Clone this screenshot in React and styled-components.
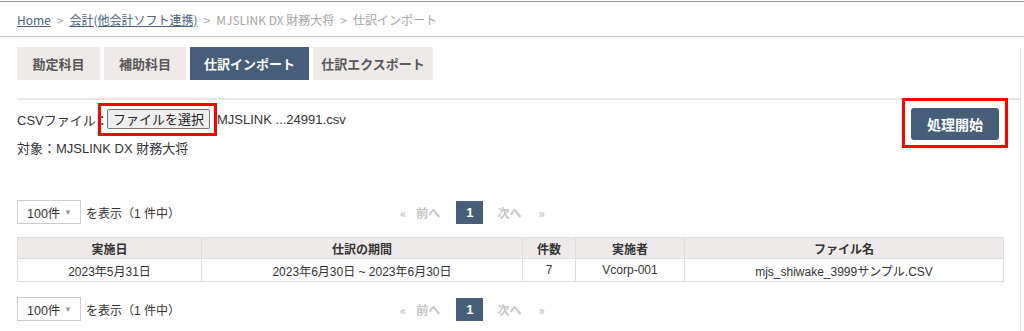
import React from "react";
import styled, { createGlobalStyle } from "styled-components";

const GlobalStyle = createGlobalStyle`
  body {
    margin: 0;
    background: #fff;
    font-family: "Liberation Sans", "Noto Sans CJK JP", sans-serif;
    color: #333;
  }
`;

const Page = styled.div`
  width: 1024px;
  height: 331px;
  overflow: hidden;
  border-top: 1px solid #9a9a9a;
  margin-top: 1px;
  box-sizing: border-box;
`;

const Breadcrumb = styled.nav`
  height: 34px;
  padding-left: 17px;
  display: flex;
  align-items: center;
  gap: 6px;
  font-family: "Noto Sans CJK JP", sans-serif;
  font-size: 12px;
  color: #a5a5a5;
  border-bottom: 1px solid #bdbdbd;
`;

const Crumb = styled.a`
  color: #4a6380;
  text-decoration: underline;
`;

const Content = styled.main`
  width: 1021px;
  box-sizing: border-box;
  padding-left: 17px;
  border-right: 1px solid #e6e6e6;
  height: 100%;
`;

const Tabs = styled.div`
  display: flex;
  gap: 4px;
  margin-top: 10px;
`;

const Tab = styled.div`
  width: ${(p) => p.$width}px;
  height: 33px;
  display: flex;
  align-items: center;
  justify-content: center;
  font-family: "Noto Sans CJK JP", sans-serif;
  font-weight: bold;
  font-size: 13px;
  background: ${(p) => (p.$active ? "#465e7a" : "#eeeae9")};
  color: ${(p) => (p.$active ? "#fff" : "#595757")};
`;

const Divider = styled.hr`
  margin: 18px 0 0;
  border: none;
  border-top: 2px solid #e6e6e6;
`;

const UploadSection = styled.section`
  display: flex;
  justify-content: space-between;
  align-items: flex-start;
`;

const UploadInfo = styled.div`
  font-size: 13px;
  color: #333;
`;

const FileRow = styled.div`
  display: flex;
  align-items: center;
  margin-top: 9px;
  height: 20px;
`;

const FileLabel = styled.span`
  width: 90px;
  white-space: nowrap;
`;

const Highlight = styled.span`
  position: relative;
  display: inline-flex;
  margin: ${(p) => p.$margin || "0"};

  &::after {
    content: "";
    position: absolute;
    inset: ${(p) => p.$inset};
    border: 3px solid #ff0000;
    pointer-events: none;
  }
`;

const FileButton = styled.button`
  height: 20px;
  padding: 0 5px;
  font-family: "Noto Sans CJK JP", sans-serif;
  font-size: 13px;
  line-height: 18px;
  color: #222;
  background: #efefef;
  border: 1px solid #767676;
  border-radius: 2px;
`;

const FileName = styled.span`
  margin-left: 7px;
`;

const Target = styled.div`
  margin-top: 10px;
  line-height: 20px;
`;

const StartButton = styled.button`
  width: 88px;
  height: 32px;
  border: none;
  border-radius: 3px;
  background: #465e7a;
  color: #fff;
  font-family: "Noto Sans CJK JP", sans-serif;
  font-weight: bold;
  font-size: 14px;
`;

const ListBar = styled.div`
  display: flex;
  align-items: center;
  height: 24px;
  margin-top: ${(p) => p.$top}px;
`;

const Summary = styled.div`
  width: 383px;
  display: flex;
  align-items: center;
  font-size: 12px;
  color: #333;
`;

const Select = styled.div`
  width: 64px;
  height: 24px;
  box-sizing: border-box;
  border: 1px solid #ccc;
  display: flex;
  align-items: center;
  justify-content: space-between;
  padding: 0 8px 0 9px;
  margin-right: 5px;
  font-size: 12.5px;
  color: #333;
`;

const Caret = styled.span`
  font-size: 8px;
  color: #999;
`;

const Pager = styled.div`
  display: flex;
  align-items: center;
  font-family: "Noto Sans CJK JP", sans-serif;
  font-weight: bold;
  font-size: 12px;
  color: #c4c4c4;
`;

const PagerLink = styled.span`
  margin-right: ${(p) => p.$gap}px;
`;

const PageNum = styled.span`
  width: 27px;
  height: 23px;
  display: flex;
  align-items: center;
  justify-content: center;
  background: #465e7a;
  color: #fff;
  font-family: "Liberation Sans", sans-serif;
  font-size: 13px;
  margin-right: 14px;
`;

const Table = styled.table`
  width: 986px;
  margin-top: 13px;
  border-collapse: collapse;
  font-size: 12px;
  color: #333;
  table-layout: fixed;

  th,
  td {
    border: 1px solid #e0dcdb;
    text-align: center;
    padding: 0;
  }
  th {
    height: 20px;
    background: #eeeae9;
    font-family: "Noto Sans CJK JP", sans-serif;
    font-weight: bold;
  }
  td {
    height: 22px;
  }
`;

const tabs = [
  { label: "勘定科目", width: 83 },
  { label: "補助科目", width: 82 },
  { label: "仕訳インポート", width: 119, active: true },
  { label: "仕訳エクスポート", width: 120 },
];

const columns = [
  { label: "実施日", width: 184 },
  { label: "仕訳の期間", width: 321 },
  { label: "件数", width: 53 },
  { label: "実施者", width: 109 },
  { label: "ファイル名", width: 319 },
];

const rows = [
  ["2023年5月31日", "2023年6月30日 ~ 2023年6月30日", "7", "Vcorp-001", "mjs_shiwake_3999サンプル.CSV"],
];

function ListControls({ top }) {
  return (
    <ListBar $top={top}>
      <Summary>
        <Select>
          100件 <Caret>▼</Caret>
        </Select>
        を表示（1 件中）
      </Summary>
      <Pager>
        <PagerLink $gap={10}>«</PagerLink>
        <PagerLink $gap={16}>前へ</PagerLink>
        <PageNum>1</PageNum>
        <PagerLink $gap={17}>次へ</PagerLink>
        <PagerLink $gap={0}>»</PagerLink>
      </Pager>
    </ListBar>
  );
}

export default function App() {
  return (
    <>
      <GlobalStyle />
      <Page>
        <Breadcrumb>
          <Crumb>Home</Crumb>
          <span>&gt;</span>
          <Crumb>会計(他会計ソフト連携)</Crumb>
          <span>&gt;</span>
          <span>MJSLINK DX 財務大将</span>
          <span>&gt;</span>
          <span>仕訳インポート</span>
        </Breadcrumb>
        <Content>
          <Tabs>
            {tabs.map((t) => (
              <Tab key={t.label} $active={t.active} $width={t.width}>
                {t.label}
              </Tab>
            ))}
          </Tabs>
          <Divider />
          <UploadSection>
            <UploadInfo>
              <FileRow>
                <FileLabel>CSVファイル：</FileLabel>
                <Highlight $inset="-6px -7px -7px -9px">
                  <FileButton>ファイルを選択</FileButton>
                </Highlight>
                <FileName>MJSLINK ...24991.csv</FileName>
              </FileRow>
              <Target>対象：MJSLINK DX 財務大将</Target>
            </UploadInfo>
            <Highlight $inset="-10px -9px -8px -9px" $margin="8px 21px 0 0">
              <StartButton>処理開始</StartButton>
            </Highlight>
          </UploadSection>
          <ListControls top={41} />
          <Table>
            <colgroup>
              {columns.map((c) => (
                <col key={c.label} style={{ width: c.width }} />
              ))}
            </colgroup>
            <thead>
              <tr>
                {columns.map((c) => (
                  <th key={c.label}>{c.label}</th>
                ))}
              </tr>
            </thead>
            <tbody>
              {rows.map((r, i) => (
                <tr key={i}>
                  {r.map((cell, j) => (
                    <td key={j}>{cell}</td>
                  ))}
                </tr>
              ))}
            </tbody>
          </Table>
          <ListControls top={15} />
        </Content>
      </Page>
    </>
  );
}
